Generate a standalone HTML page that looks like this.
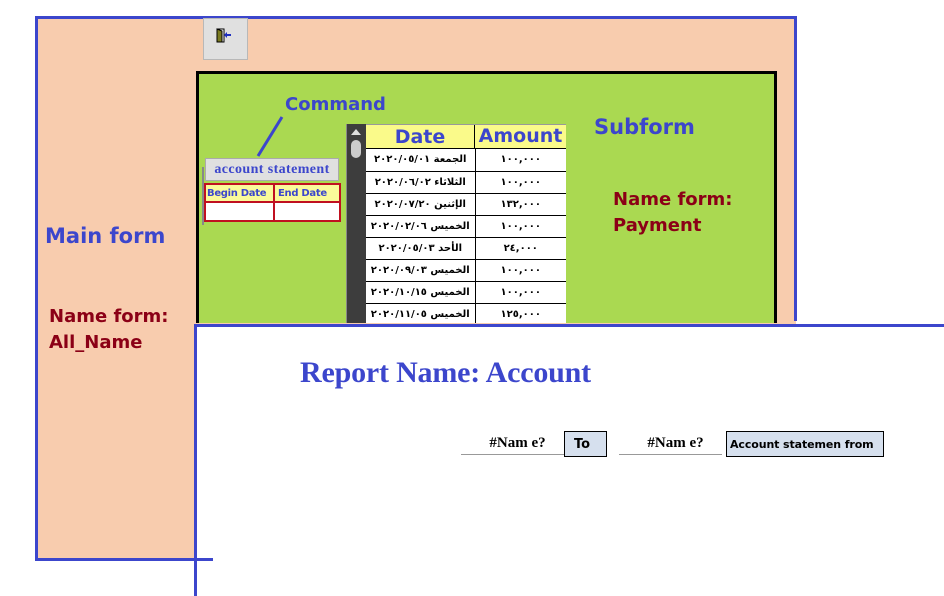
<!DOCTYPE html>
<html><head><meta charset="utf-8"><style>
*{margin:0;padding:0;box-sizing:border-box}
body{width:944px;height:596px;background:#fff;position:relative;overflow:hidden;font-family:"Liberation Sans",sans-serif}
.a{position:absolute}
.b{background:#3c46cc}
.t{font-family:"DejaVu Sans","Liberation Sans",sans-serif;font-weight:bold}
table{border-collapse:collapse}
#dt td{border-bottom:1px solid #000;height:22px;font:bold 10px "DejaVu Sans","Noto Sans CJK SC",sans-serif;text-align:center;color:#000;background:#fff;white-space:nowrap;padding:0;overflow:hidden}
#dt td.d{border-right:1px solid #000;width:109px;letter-spacing:-.3px}
</style></head><body>
<div class="a" style="left:36px;top:17px;width:760px;height:542px;background:#f8ccae"></div>
<div class="a b" style="left:35px;top:16px;width:762px;height:3px"></div>
<div class="a b" style="left:35px;top:16px;width:3px;height:545px"></div>
<div class="a b" style="left:794px;top:16px;width:3px;height:305px"></div>
<div class="a b" style="left:35px;top:558px;width:178px;height:3px"></div>
<div class="a" style="left:203px;top:18px;width:45px;height:42px;background:#e0e0e0;border:1px solid #b8b8b8"></div>
<svg class="a" style="left:214px;top:27px" width="22" height="18"><rect x="3" y="2" width="7" height="13" fill="#fff" stroke="#000" stroke-width="1"/><polygon points="3,2 8,4 8,15 3,15" fill="#7a7a20" stroke="#000" stroke-width="1"/><line x1="11" y1="8" x2="17" y2="8" stroke="#2030c0" stroke-width="2"/><polygon points="13,5 13,11 10,8" fill="#2030c0"/></svg>
<div class="a" style="left:196px;top:71px;width:581px;height:252px;background:#aad951;border:3px solid #000;border-bottom:none"></div>
<div class="a t" style="left:285px;top:94px;font-size:18px;color:#3c46cc">Command</div>
<svg class="a" style="left:250px;top:115px" width="40" height="45"><line x1="32" y1="2" x2="8" y2="41" stroke="#3c46cc" stroke-width="3"/></svg>
<div class="a t" style="left:594px;top:115px;font-size:21px;color:#3c46cc">Subform</div>
<div class="a t" style="left:613px;top:187px;font-size:18px;line-height:26px;color:#8b0016">Name form:<br>Payment</div>
<div class="a" style="left:202px;top:167px;width:2px;height:58px;background:#888"></div>
<div class="a" style="left:205px;top:158px;width:134px;height:23px;background:#e0e0e0;border:1px solid #aaa;font:bold 14px 'Liberation Serif',serif;color:#3c46cc;text-align:center;line-height:21px;letter-spacing:.4px;white-space:nowrap">account statement</div>
<table class="a" style="left:204px;top:183px;width:137px;table-layout:fixed">
<tr style="height:18px;background:#fafa9a"><td style="width:69px;border:2px solid #c01020;font:bold 10px 'DejaVu Sans',sans-serif;color:#3c46cc;padding-left:1px;white-space:nowrap;overflow:hidden;letter-spacing:-.3px">Begin Date</td><td style="border:2px solid #c01020;font:bold 10px 'DejaVu Sans',sans-serif;color:#3c46cc;padding-left:3px;white-space:nowrap;overflow:hidden;letter-spacing:-.3px">End Date</td></tr>
<tr style="height:19px;background:#fff"><td style="border:2px solid #c01020"></td><td style="border:2px solid #c01020"></td></tr></table>
<div class="a" style="left:346px;top:124px;width:20px;height:199px;background:#3d3d3d;border-left:1px solid #888"></div>
<svg class="a" style="left:350px;top:128px" width="12" height="30"><polygon points="6,1 11,7 1,7" fill="#ddd"/><rect x="1" y="12" width="10" height="18" rx="5" fill="#ccc"/></svg>
<div class="a" style="left:366px;top:124px;width:200px;height:199px;background:#fff;border-top:1px solid #999;overflow:hidden">
<div style="display:flex;height:24px;background:#fafa8a;border-bottom:1px solid #000"><div class="t" style="width:109px;border-right:1px solid #000;font-size:19px;color:#3c46cc;text-align:center;padding-top:1px">Date</div><div class="t" style="width:91px;font-size:19px;color:#3c46cc;text-align:center">Amount</div></div>
<table id="dt" style="width:200px;table-layout:fixed">
<tr><td class="d">الجمعة ٢٠٢٠/٠٥/٠١</td><td>١٠٠,٠٠٠</td></tr>
<tr><td class="d">الثلاثاء ٢٠٢٠/٠٦/٠٢</td><td>١٠٠,٠٠٠</td></tr>
<tr><td class="d">الإثنين ٢٠٢٠/٠٧/٢٠</td><td>١٣٢,٠٠٠</td></tr>
<tr><td class="d">الخميس ٢٠٢٠/٠٢/٠٦</td><td>١٠٠,٠٠٠</td></tr>
<tr><td class="d">الأحد ٢٠٢٠/٠٥/٠٣</td><td>٢٤,٠٠٠</td></tr>
<tr><td class="d">الخميس ٢٠٢٠/٠٩/٠٣</td><td>١٠٠,٠٠٠</td></tr>
<tr><td class="d">الخميس ٢٠٢٠/١٠/١٥</td><td>١٠٠,٠٠٠</td></tr>
<tr><td class="d">الخميس ٢٠٢٠/١١/٠٥</td><td>١٢٥,٠٠٠</td></tr>
</table></div>
<div class="a t" style="left:45px;top:224px;font-size:21px;color:#3c46cc">Main form</div>
<div class="a t" style="left:49px;top:304px;font-size:18px;line-height:26px;color:#8b0016">Name form:<br>All_Name</div>
<div class="a" style="left:196px;top:326px;width:748px;height:270px;background:#fff"></div>
<div class="a b" style="left:194px;top:324px;width:750px;height:3px"></div>
<div class="a b" style="left:194px;top:324px;width:3px;height:272px"></div>
<div class="a b" style="left:194px;top:558px;width:19px;height:3px"></div>
<div class="a" style="left:300px;top:356px;font:bold 30px 'Liberation Serif',serif;color:#3c46cc;letter-spacing:-.2px;white-space:nowrap">Report Name: Account</div>
<div class="a" style="left:461px;top:435px;width:103px;height:20px;border-bottom:1px solid #999;font:bold 15px 'Liberation Serif',serif;text-align:center;padding-left:10px">#Nam e?</div>
<div class="a" style="left:564px;top:431px;width:43px;height:26px;background:#d6e0ee;border:1px solid #000;font:bold 13px 'DejaVu Sans',sans-serif;padding:5px 0 0 9px">To</div>
<div class="a" style="left:619px;top:435px;width:103px;height:20px;border-bottom:1px solid #999;font:bold 15px 'Liberation Serif',serif;text-align:center;padding-left:10px">#Nam e?</div>
<div class="a" style="left:726px;top:431px;width:158px;height:26px;background:#d6e0ee;border:1px solid #000;font:bold 11px 'DejaVu Sans',sans-serif;padding:6px 0 0 3px;white-space:nowrap;overflow:hidden;letter-spacing:-.1px">Account statemen from</div>
</body></html>
